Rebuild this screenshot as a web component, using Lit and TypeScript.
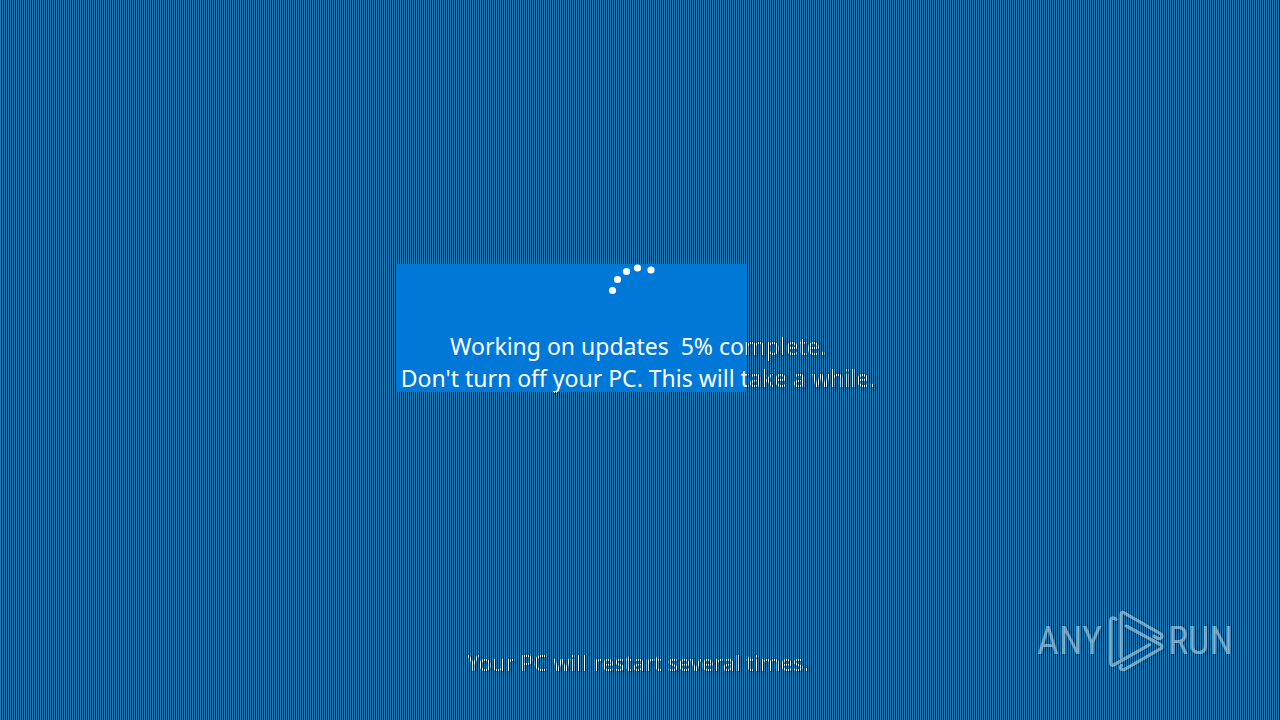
import { LitElement, html, css, svg } from "lit";
import { customElement } from "lit/decorators.js";

const DOTS = [
  [612.5, 290.5],
  [617.5, 279.5],
  [626.5, 271.5],
  [637.5, 268],
  [651, 270],
];

@customElement("app-root")
class AppRoot extends LitElement {
  static styles = css`
    :host {
      display: block;
      font-family: "Noto Sans", "Open Sans", sans-serif;
      color: #fff;
    }
    .screen {
      position: relative;
      z-index: 0;
      min-height: 100vh;
      overflow: hidden;
      background: #0078d7;
      display: flex;
      flex-direction: column;
      align-items: center;
      box-sizing: border-box;
      padding: 264px 4px 42px 0;
    }
    .layer {
      position: absolute;
      inset: 0;
      clip-path: polygon(
        evenodd,
        0 0, 100% 0, 100% 100%, 0 100%, 0 0,
        calc(50% - 244px) 264px, calc(50% + 107px) 264px,
        calc(50% + 107px) 392px, calc(50% - 244px) 392px,
        calc(50% - 244px) 264px
      );
    }
    .tint {
      z-index: -1;
      background: #227cb8;
    }
    .mesh {
      background: repeating-linear-gradient(90deg, transparent 0 1px, #001436 1px 2px);
    }
    .spinner {
      display: block;
      width: 60px;
      height: 66px;
    }
    .status {
      margin: 0;
      text-align: center;
      font-size: 23px;
      line-height: 32px;
      font-weight: 400;
      white-space: pre;
    }
    .note {
      margin: auto 0 0;
      font-size: 22px;
      line-height: 32px;
    }
    .brand {
      position: absolute;
      right: 47px;
      bottom: 44px;
      display: flex;
      align-items: center;
      opacity: 0.62;
      color: #c8d8e0;
      font-family: "Roboto Condensed", "Liberation Sans Narrow", Roboto, sans-serif;
      font-weight: 400;
      font-size: 38px;
      line-height: 44px;
    }
    .mark {
      display: block;
      width: 64px;
      height: 70px;
      margin-left: 2px;
      fill: none;
      stroke: currentColor;
      stroke-width: 10;
      stroke-linecap: round;
      stroke-linejoin: round;
    }
  `;

  render() {
    return html`
      <main class="screen">
        <div class="layer tint"></div>
        <svg class="spinner" viewBox="608 264 60 66" role="img" aria-label="Loading">
          ${DOTS.map(([x, y]) => svg`<circle cx=${x} cy=${y} r="3.6" fill="#fff" />`)}
        </svg>
        <p class="status">Working on updates  5% complete.
Don't turn off your PC. This will take a while.</p>
        <p class="note">Your PC will restart several times.</p>
        <div class="layer mesh"></div>
        <div class="brand">
          <span>ANY</span>
          <svg class="mark" viewBox="0 0 192 210" aria-hidden="true">
            <path d="M36 40Q33 36 27 36Q20 36 20 44V170Q20 180 29 177L137 116" />
            <path d="M51 154V26Q51 17 59 20L169 83Q176 88 173 94Q169 100 161 97L150 91" />
            <path d="M67 60L170 116Q178 122 170 128L62 190Q54 194 50 188Q48 182 52 178" />
          </svg>
          <span>RUN</span>
        </div>
      </main>
    `;
  }
}
